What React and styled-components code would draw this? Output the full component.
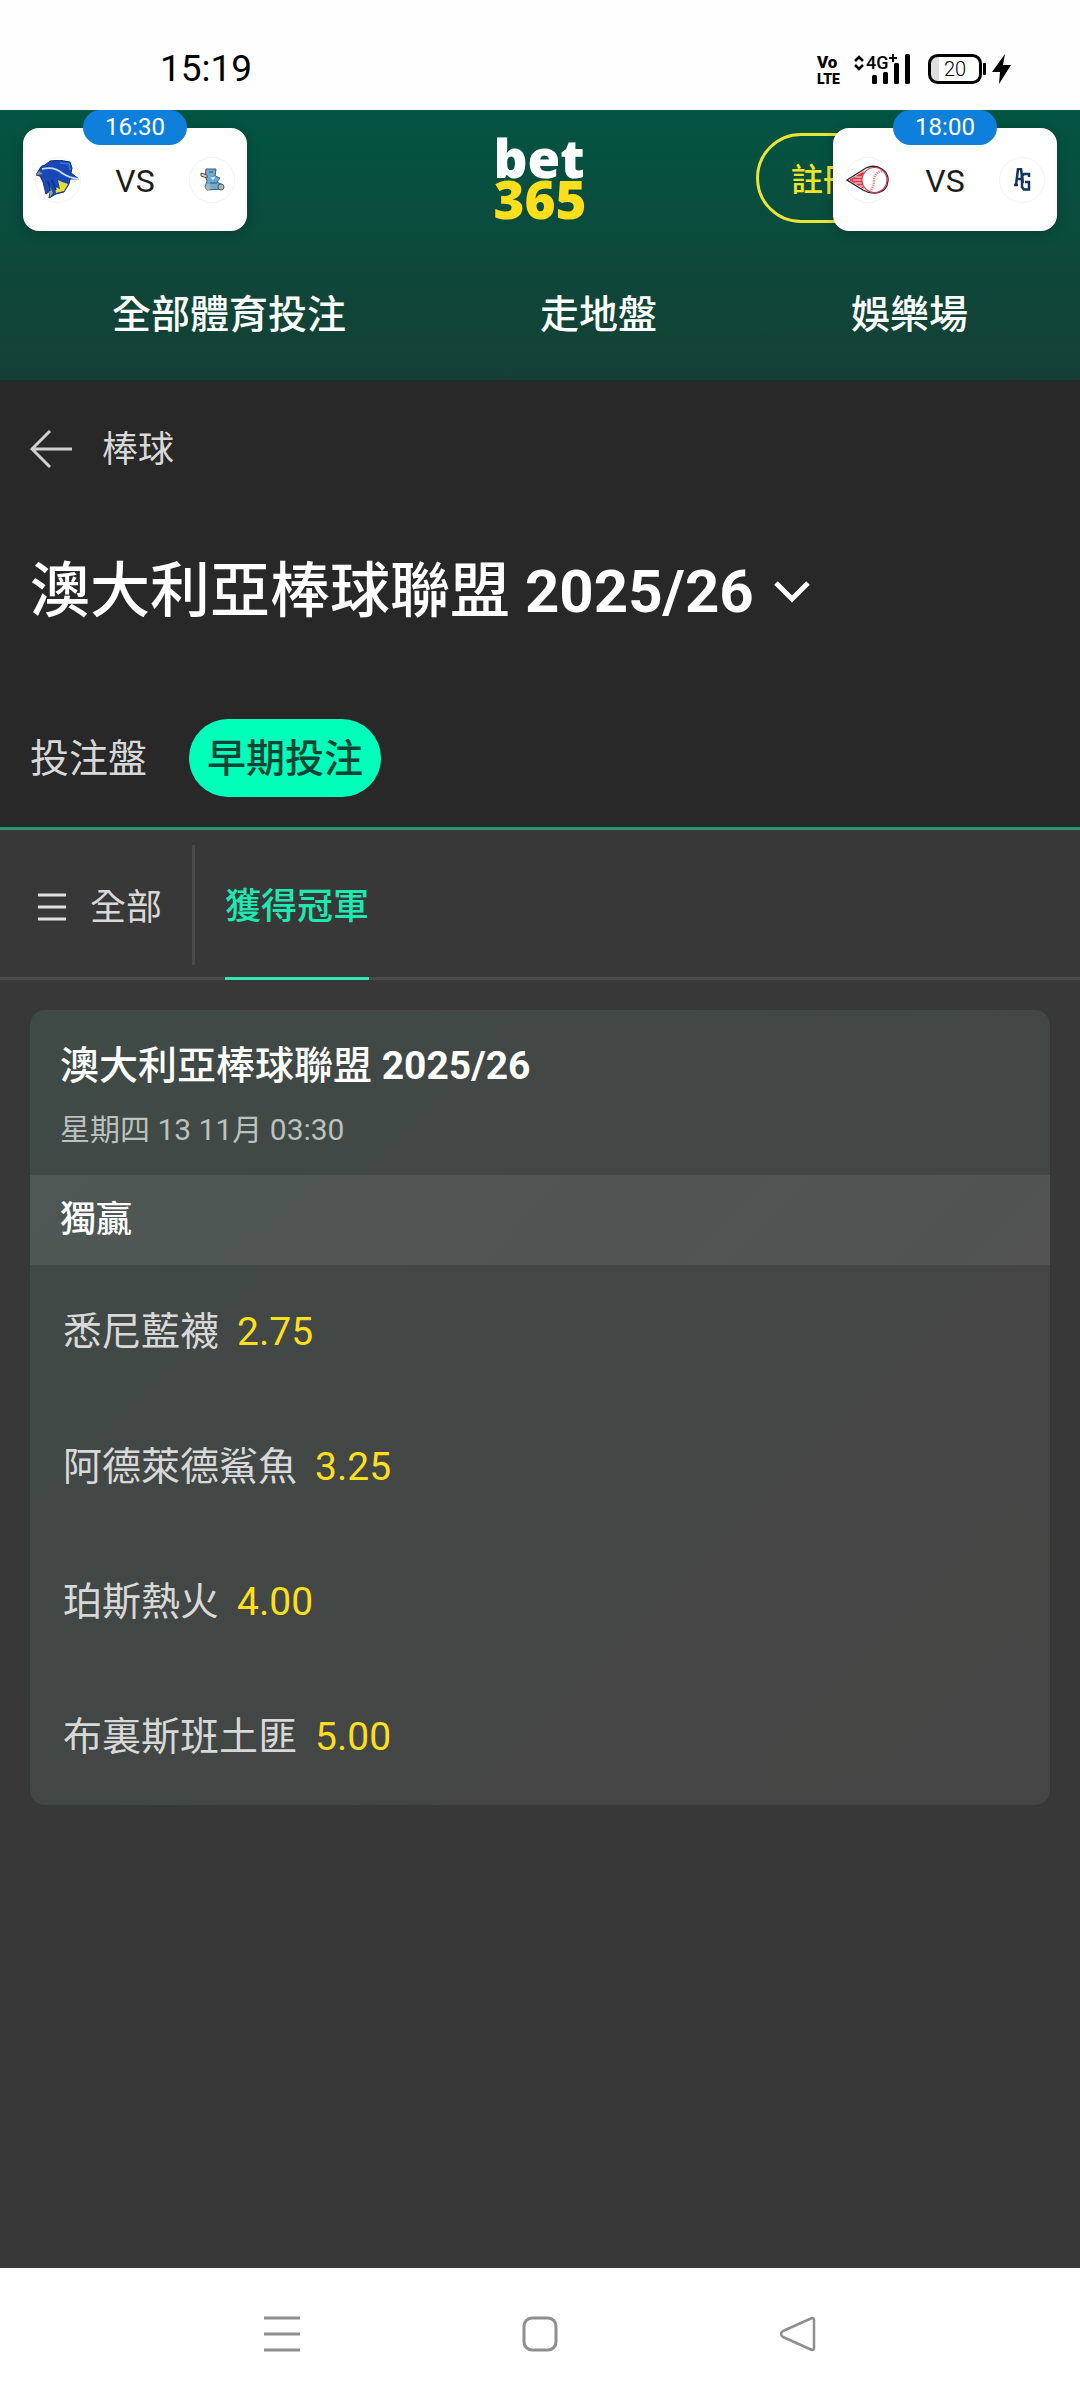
import React from "react";
import styled, { createGlobalStyle } from "styled-components";

const GlobalStyle = createGlobalStyle`
  *, *::before, *::after { box-sizing: border-box; }
  html, body, #root { height: 100%; }
  body {
    margin: 0;
    background: #383838;
    font-family: Roboto, "Noto Sans CJK TC", sans-serif;
    line-height: 1.2;
    color: #d8d8d8;
  }
  h1, h2, h3, p, ul { margin: 0; padding: 0; }
  ul { list-style: none; }
  a { color: inherit; text-decoration: none; }
  button { border: 0; padding: 0; background: none; font: inherit; color: inherit; cursor: pointer; }
  svg { display: block; flex: none; }
`;

const Screen = styled.div`
  min-height: 100%;
  display: flex;
  flex-direction: column;
`;

const StatusBar = styled.div`
  height: 110px;
  padding: 28px 68px 0 160px;
  display: flex;
  align-items: center;
  justify-content: space-between;
  background: #fefefe;
  color: #000;
`;

const Clock = styled.time`
  font-size: 37px;
  line-height: 40px;
`;

const Header = styled.header`
  position: relative;
  background: linear-gradient(180deg, #025542 0%, #153f35 100%);
`;

const BrandRow = styled.div`
  height: 136px;
  padding: 0 190px;
  display: grid;
  grid-template-columns: 1fr auto 1fr;
  align-items: center;
`;

const Logo = styled.a`
  grid-column: 2;
  display: flex;
  flex-direction: column;
  font-family: "Noto Sans", "Open Sans", sans-serif;
  font-size: 53px;
  font-weight: 900;
  line-height: 41px;
  color: #fff;
`;

const LogoNumber = styled.span`
  color: #ffdf1b;
`;

const RegisterButton = styled.button`
  justify-self: end;
  height: 90px;
  padding: 4px 32px 0;
  border: 3px solid #e9e436;
  border-radius: 45px;
  font-size: 32px;
  font-weight: 500;
  white-space: nowrap;
  color: #f2e527;
`;

const MainNav = styled.nav`
  height: 134px;
  padding: 4px 112px 0;
  display: flex;
  align-items: center;
  justify-content: space-between;
  font-size: 39px;
  font-weight: 500;
  color: #fff;
`;

const MatchStrip = styled.div`
  position: absolute;
  top: 0;
  left: 23px;
  right: 23px;
  display: flex;
  justify-content: space-between;
  align-items: flex-start;
`;

const Match = styled.button`
  position: relative;
  width: 224px;
  height: 103px;
  margin-top: 18px;
  padding: 0 12px;
  display: flex;
  align-items: center;
  justify-content: space-between;
  border-radius: 16px;
  background: #fff;
  box-shadow: 0 2px 12px rgba(0, 0, 0, 0.2);
  color: #1c1c1c;
  font-size: 32px;
`;

const Versus = styled.span`
  padding-top: 4px;
`;

const Kickoff = styled.span`
  position: absolute;
  top: -18px;
  left: 60px;
  width: 104px;
  height: 35px;
  border-radius: 18px;
  background: #0f7fdc;
  color: #fff;
  font-size: 24px;
  line-height: 35px;
`;

const Crest = styled.span`
  width: 46px;
  height: 46px;
  display: grid;
  place-items: center;
  border: 1px solid #f3f3f3;
  border-radius: 50%;
`;

const PageHead = styled.section`
  padding: 0 30px;
  background: #282828;
  border-bottom: 3px solid #2f9470;
`;

const BackLink = styled.a`
  height: 138px;
  display: flex;
  align-items: center;
  gap: 30px;
  font-size: 36px;
`;

const BackLabel = styled.span`
  padding-top: 4px;
`;

const TitleButton = styled.button`
  height: 144px;
  padding-top: 4px;
  display: flex;
  align-items: center;
  gap: 20px;
  color: #fff;
`;

const Title = styled.h1`
  font-size: 60px;
  font-weight: 500;
`;

const Season = styled.span`
  font-weight: 700;
`;

const Pills = styled.div`
  padding: 57px 0 30px;
  display: flex;
  align-items: center;
  gap: 42px;
`;

const Pill = styled.button`
  height: 78px;
  padding: 2px ${(p) => (p.$active ? "18px" : "0")} 0;
  border-radius: 39px;
  background: ${(p) => (p.$active ? "#00ffb8" : "transparent")};
  color: ${(p) => (p.$active ? "#0b4435" : "#d8d8d8")};
  font-size: 39px;
  font-weight: ${(p) => (p.$active ? 500 : 400)};
`;

const MarketBar = styled.div`
  height: 150px;
  padding-left: 30px;
  display: flex;
  border-bottom: 3px solid #4a4a4a;
  font-size: 36px;
`;

const AllMarkets = styled.button`
  height: 120px;
  margin-top: 15px;
  padding: 4px 30px 0 8px;
  display: flex;
  align-items: center;
  gap: 24px;
  border-right: 3px solid #4a4a4a;
`;

const AllLabel = styled.span`
  padding-top: 4px;
`;

const MarketTab = styled.button`
  height: 150px;
  margin-left: 30px;
  padding-top: 8px;
  border-bottom: 3px solid #33e9b1;
  color: #1de9b0;
  font-weight: 500;
`;

const Main = styled.main`
  flex: 1;
  padding: 30px;
`;

const Card = styled.article`
  border-radius: 15px;
  overflow: hidden;
  background: linear-gradient(135deg, #3f4a46 0%, #424745 45%, #444544 70%, #464545 100%);
`;

const CardHead = styled.header`
  height: 165px;
  padding: 32px 30px 0;
`;

const CardTitle = styled.h2`
  font-size: 39px;
  line-height: 48px;
  font-weight: 500;
  color: #fff;
`;

const CardDate = styled.p`
  margin-top: 22px;
  font-size: 30px;
  line-height: 36px;
  color: #bcc0be;
`;

const Band = styled.h3`
  padding: 0 30px;
  background: rgba(255, 255, 255, 0.08);
  font-size: 36px;
  line-height: 90px;
  font-weight: 500;
  color: #fff;
`;

const Selection = styled.button`
  width: 100%;
  height: 135px;
  padding: 0 33px;
  display: flex;
  align-items: center;
  gap: 18px;
  font-size: 39px;
`;

const Odds = styled.span`
  color: #ffdf1b;
`;

const SystemNav = styled.nav`
  height: 132px;
  display: flex;
  align-items: center;
  justify-content: center;
  gap: 222px;
  background: #fff;
`;

const SystemButton = styled.button`
  width: 36px;
  height: 36px;
`;

const StatusIcons = () => (
  <svg width="196" height="40" viewBox="0 0 196 40" role="img" aria-label="VoLTE, 4G+, 20">
    <g fontFamily="Roboto, sans-serif" fill="#000">
      <text x="1" y="19" fontSize="17" fontWeight="900">Vo</text>
      <text x="1" y="35" fontSize="14" fontWeight="900">LTE</text>
      <text x="50" y="20" fontSize="18" fontWeight="500">4G</text>
      <text x="128" y="27" fontSize="20" fontWeight="300">20</text>
    </g>
    <path d="M39 12 L43 8 L47 12 M39 16 L43 20 L47 16" fill="none" stroke="#000" strokeWidth="2.5" />
    <path d="M73 9 H81 M77 5 V13" stroke="#000" strokeWidth="2" />
    <g fill="#000">
      <rect x="56" y="26" width="5" height="9" rx="1.5" />
      <rect x="67" y="23" width="5" height="12" rx="1.5" />
      <rect x="78" y="14" width="5" height="21" rx="1.5" />
      <rect x="89" y="5" width="5" height="30" rx="1.5" />
      <rect x="167" y="14" width="3" height="12" rx="1" />
      <path d="M189 5 L176 23 H184 L183 35 L195 16 H187Z" />
    </g>
    <path d="M123 7 H120 Q114 7 114 14 V26 Q114 33 120 33 H123Z" fill="#dedede" />
    <rect x="113.5" y="6.500" width="51" height="27" rx="8" fill="none" stroke="#000" strokeWidth="3" />
  </svg>
);

const Bluebird = () => (
  <svg width="44" height="39" viewBox="0 0 44 39">
    <path d="M0 15 L3 10 Q5 5 9 5 L14 1 Q24 -1 34 2 L36 8 L35 13 L43 19 L34 19 L33 24 L28 32 L20 34 L13 38 L14 31 L10 34 L7 22 L4 16Z" fill="#1748b5" stroke="#1c2f6e" strokeWidth="1" />
    <path d="M22 20 L24 29 L19 27 L20 33 L28 31 L32 24 L26 22Z" fill="#e8e02f" />
    <path d="M12 23 L17 33 L14 37Z" fill="#8fae8a" />
    <path d="M16 20 L20 30 M12 21 L14 31" stroke="#0d2b7c" strokeWidth="1.500" />
    <path d="M0 15 L3 11 L7 14Z" fill="#8e9a8c" />
    <path d="M6 9 Q18 6 26 13 Q33 18 43 19" fill="none" stroke="#c6dcf6" strokeWidth="1.800" />
    <path d="M24 3 L33 4 L34 10" fill="none" stroke="#3c75db" strokeWidth="1.500" />
  </svg>
);

const Bear = () => (
  <svg width="25" height="23" viewBox="0 0 25 23">
    <path d="M6 1 L16 1 L15 8 L20 10 L17 14 L23 17 L22 21 L7 22 L5 19 L7 13 L5 8Z" fill="#6cabd6" stroke="#3f5a70" strokeWidth="1" />
    <path d="M1 5 L7 7 V10 L1 8Z" fill="#d9cfc0" stroke="#55504a" strokeWidth="1" />
    <ellipse cx="21" cy="19" rx="3" ry="3" fill="#aab3b8" stroke="#55606a" strokeWidth="1" />
    <ellipse cx="8" cy="19" rx="2.500" ry="3" fill="#aab3b8" />
    <path d="M9 8 Q12 11 16 8 L13 12Z" fill="#e9f2f8" />
    <path d="M9 4 H13 M10 15 H17" stroke="#35526b" strokeWidth="1" />
  </svg>
);

const Fireball = () => (
  <svg width="44" height="30" viewBox="0 0 44 30">
    <path d="M1 15 L20 3 Q28 -1 36 4 Q43 9 42 16 Q41 27 30 28 Q24 29 17 25Z" fill="#fff" stroke="#2b2025" strokeWidth="1.300" />
    <path d="M3 15 L18 6 Q14 15 18 24Z" fill="#e0364a" />
    <path d="M9 12 H17 M7 15 H16 M9 18 H17 M13 21 H17" stroke="#fff" strokeWidth="0.900" />
    <circle cx="28.500" cy="15" r="12.500" fill="#fff" stroke="#d33448" strokeWidth="1.200" />
    <path d="M36 6 Q28 8 28 15 Q28 22 24 26" fill="none" stroke="#e8808b" strokeWidth="2.500" strokeDasharray="1.200 1" />
  </svg>
);

const Monogram = () => (
  <svg width="17" height="23" viewBox="0 0 17 23" fill="none" stroke="#15345c" strokeWidth="2.500">
    <path d="M0 17 H4 M2 17 L4 1 H7 L9 15 M3 11 H8" />
    <path d="M15 9 V6 H10 L8 8 V19 L10 21.500 H15 V14 H11" />
  </svg>
);

const matches = [
  { time: "16:30", home: <Bluebird />, away: <Bear /> },
  { time: "18:00", home: <Fireball />, away: <Monogram /> },
];

const selections = [
  ["悉尼藍襪", "2.75"],
  ["阿德萊德鯊魚", "3.25"],
  ["珀斯熱火", "4.00"],
  ["布裏斯班土匪", "5.00"],
];

export default function App() {
  return (
    <Screen>
      <GlobalStyle />
      <StatusBar>
        <Clock>15:19</Clock>
        <StatusIcons />
      </StatusBar>
      <Header>
        <BrandRow>
          <Logo href="#home">
            bet<LogoNumber>365</LogoNumber>
          </Logo>
          <RegisterButton>註冊</RegisterButton>
        </BrandRow>
        <MainNav>
          <a href="#sports">全部體育投注</a>
          <a href="#live">走地盤</a>
          <a href="#casino">娛樂場</a>
        </MainNav>
        <MatchStrip>
          {matches.map((m) => (
            <Match key={m.time}>
              <Kickoff>{m.time}</Kickoff>
              <Crest>{m.home}</Crest>
              <Versus>VS</Versus>
              <Crest>{m.away}</Crest>
            </Match>
          ))}
        </MatchStrip>
      </Header>
      <PageHead>
        <BackLink href="#baseball">
          <svg width="42" height="38" viewBox="0 0 42 38" fill="none" stroke="#d0d0d0" strokeWidth="3">
            <path d="M20 1 L2 19 L20 37 M2 19 H42" />
          </svg>
          <BackLabel>棒球</BackLabel>
        </BackLink>
        <TitleButton>
          <Title>
            澳大利亞棒球聯盟 <Season>2025/26</Season>
          </Title>
          <svg width="36" height="22" viewBox="0 0 36 22" fill="none" stroke="#fff" strokeWidth="5">
            <path d="M2 2 L18 18 L34 2" />
          </svg>
        </TitleButton>
        <Pills>
          <Pill>投注盤</Pill>
          <Pill $active>早期投注</Pill>
        </Pills>
      </PageHead>
      <MarketBar>
        <AllMarkets>
          <svg width="28" height="28" viewBox="0 0 28 28" stroke="#e0e0e0" strokeWidth="3">
            <path d="M0 2 H28 M0 14 H28 M0 26 H28" />
          </svg>
          <AllLabel>全部</AllLabel>
        </AllMarkets>
        <MarketTab>獲得冠軍</MarketTab>
      </MarketBar>
      <Main>
        <Card>
          <CardHead>
            <CardTitle>
              澳大利亞棒球聯盟 <Season>2025/26</Season>
            </CardTitle>
            <CardDate>星期四 13 11月 03:30</CardDate>
          </CardHead>
          <Band>獨贏</Band>
          <ul>
            {selections.map(([name, odds]) => (
              <li key={name}>
                <Selection>
                  {name}
                  <Odds>{odds}</Odds>
                </Selection>
              </li>
            ))}
          </ul>
        </Card>
      </Main>
      <SystemNav>
        <SystemButton aria-label="recent">
          <svg width="36" height="36" viewBox="0 0 36 36" stroke="#8f8f8f" strokeWidth="3">
            <path d="M0 2 H36 M0 18 H36 M0 34 H36" />
          </svg>
        </SystemButton>
        <SystemButton aria-label="home">
          <svg width="36" height="36" viewBox="0 0 36 36" fill="none" stroke="#8f8f8f" strokeWidth="3">
            <rect x="2" y="2" width="32" height="32" rx="8" />
          </svg>
        </SystemButton>
        <SystemButton aria-label="back">
          <svg width="36" height="36" viewBox="0 0 36 36" fill="none" stroke="#8f8f8f" strokeWidth="2.500" strokeLinejoin="round">
            <path d="M32 2 L3 15 Q-1 18 3 21 L32 34 Q34 34 34 32 V4 Q34 2 32 2Z" />
          </svg>
        </SystemButton>
      </SystemNav>
    </Screen>
  );
}
